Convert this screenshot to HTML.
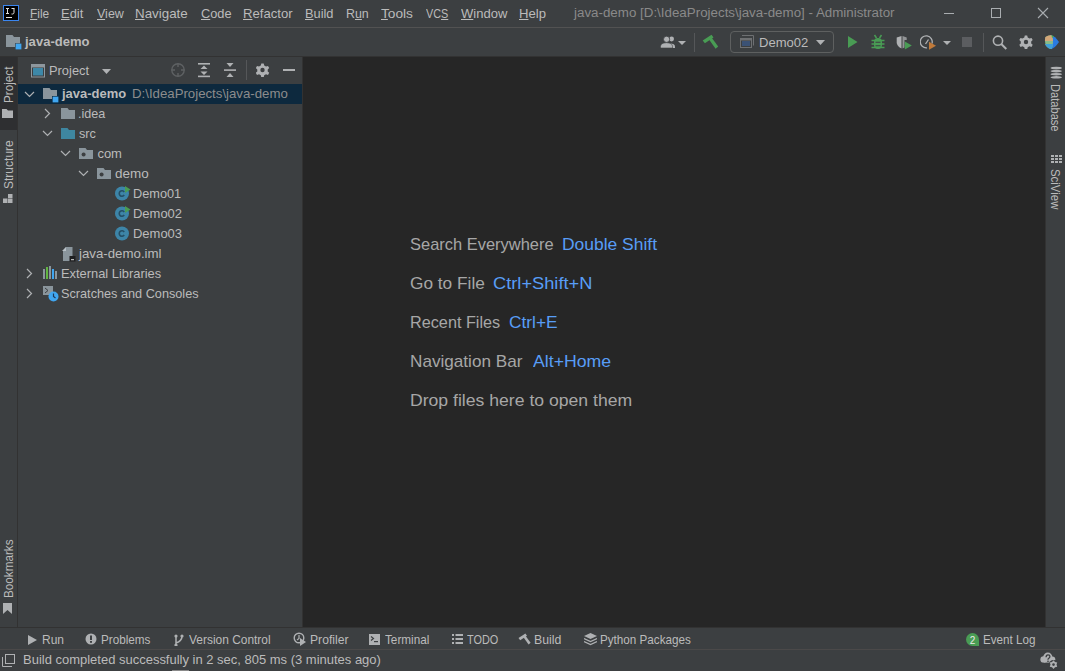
<!DOCTYPE html>
<html><head><meta charset="utf-8"><style>
html,body{margin:0;padding:0;width:1065px;height:671px;overflow:hidden;background:#3c3f41}
.r{position:absolute;display:block}
.t{position:absolute;white-space:pre;font-family:"Liberation Sans",sans-serif}
u{text-decoration:underline;text-underline-offset:1px}
</style></head><body>
<div class="r" style="left:0px;top:0px;width:1065px;height:671px;background:#3c3f41;"></div>
<div class="r" style="left:0px;top:27px;width:1065px;height:1px;background:#525252;"></div>
<div class="r" style="left:0px;top:56px;width:1065px;height:1px;background:#323232;"></div>
<div class="r" style="left:0px;top:57px;width:17px;height:570px;background:#3c3f41;"></div>
<div class="r" style="left:0px;top:57px;width:17px;height:73px;background:#2e2f31;"></div>
<div class="r" style="left:17px;top:57px;width:1px;height:570px;background:#323232;"></div>
<div class="r" style="left:302px;top:57px;width:1px;height:570px;background:#323232;"></div>
<div class="r" style="left:303px;top:57px;width:742px;height:570px;background:#262626;"></div>
<div class="r" style="left:1045px;top:57px;width:1px;height:570px;background:#323232;"></div>
<div class="r" style="left:0px;top:627px;width:1065px;height:1px;background:#323232;"></div>
<div class="r" style="left:0px;top:649px;width:1065px;height:1px;background:#4b4949;"></div>
<div class="r" style="left:18px;top:84px;width:284px;height:20px;background:#0d293e;"></div>
<svg class="r" style="left:3px;top:5px" width="17" height="17" viewBox="0 0 17 17"><rect x="0.5" y="0.5" width="15" height="15" fill="#000" stroke="#3b86f0" stroke-width="1"/><path d="M3 3.5h3M4.5 3.5v5M3 8.5h3M8.5 3.5h3M11 3.5v4q0 1.5-1.5 1.5h-1" stroke="#e0e0e0" stroke-width="1" fill="none"/><rect x="3" y="12" width="6" height="1" fill="#e0e0e0"/></svg>
<div class="t" style="left:30.19px;top:7.00px;font-size:13px;line-height:13px;color:#bbbbbb;font-weight:normal;transform-origin:0 0;transform:scaleX(0.9150);"><u>F</u>ile</div>
<div class="t" style="left:61.10px;top:7.00px;font-size:13px;line-height:13px;color:#bbbbbb;font-weight:normal;transform-origin:0 0;transform:scaleX(0.9955);"><u>E</u>dit</div>
<div class="t" style="left:97.00px;top:7.00px;font-size:13px;line-height:13px;color:#bbbbbb;font-weight:normal;transform-origin:0 0;transform:scaleX(0.9607);"><u>V</u>iew</div>
<div class="t" style="left:134.97px;top:7.00px;font-size:13px;line-height:13px;color:#bbbbbb;font-weight:normal;transform-origin:0 0;transform:scaleX(1.0280);"><u>N</u>avigate</div>
<div class="t" style="left:200.80px;top:7.00px;font-size:13px;line-height:13px;color:#bbbbbb;font-weight:normal;transform-origin:0 0;transform:scaleX(0.9839);"><u>C</u>ode</div>
<div class="t" style="left:243.19px;top:7.00px;font-size:13px;line-height:13px;color:#bbbbbb;font-weight:normal;transform-origin:0 0;transform:scaleX(1.0083);"><u>R</u>efactor</div>
<div class="t" style="left:304.51px;top:7.00px;font-size:13px;line-height:13px;color:#bbbbbb;font-weight:normal;transform-origin:0 0;transform:scaleX(0.9857);"><u>B</u>uild</div>
<div class="t" style="left:345.75px;top:7.00px;font-size:13px;line-height:13px;color:#bbbbbb;font-weight:normal;transform-origin:0 0;transform:scaleX(0.9545);">R<u>u</u>n</div>
<div class="t" style="left:381.20px;top:7.00px;font-size:13px;line-height:13px;color:#bbbbbb;font-weight:normal;transform-origin:0 0;transform:scaleX(1.0533);"><u>T</u>ools</div>
<div class="t" style="left:426.30px;top:7.00px;font-size:13px;line-height:13px;color:#bbbbbb;font-weight:normal;transform-origin:0 0;transform:scaleX(0.8333);">VC<u>S</u></div>
<div class="t" style="left:460.90px;top:7.00px;font-size:13px;line-height:13px;color:#bbbbbb;font-weight:normal;transform-origin:0 0;transform:scaleX(1.0021);"><u>W</u>indow</div>
<div class="t" style="left:519.29px;top:7.00px;font-size:13px;line-height:13px;color:#bbbbbb;font-weight:normal;transform-origin:0 0;transform:scaleX(1.0077);"><u>H</u>elp</div>
<div class="t" style="left:573.91px;top:6.84px;font-size:12px;line-height:12px;color:#8a8a8a;font-weight:normal;transform-origin:0 0;transform:scaleX(1.1125);">java-demo [D:\IdeaProjects\java-demo] - Administrator</div>
<div class="r" style="left:944px;top:13px;width:10px;height:1px;background:#a9adb0;"></div>
<div class="r" style="left:991px;top:8px;width:10px;height:10px;background:none;border:1px solid #a9adb0;box-sizing:border-box"></div>
<svg class="r" style="left:1037px;top:7px" width="12" height="12" viewBox="0 0 12 12"><path d="M1 1L11 11M11 1L1 11" stroke="#a9adb0" stroke-width="1.1"/></svg>
<svg class="r" style="left:6px;top:35px" width="17" height="15" viewBox="0 0 17 15"><path d="M0 0h6.5l1.5 2h6v7h-5v3h-9z" fill="#8a959c"/><rect x="9.25" y="8.25" width="6.5" height="6.5" fill="#40a6f0" stroke="#3c3f41" stroke-width="0.5"/></svg>
<div class="t" style="left:24.50px;top:35.00px;font-size:13px;line-height:13px;color:#bbbbbb;font-weight:bold;transform-origin:0 0;transform:scaleX(1.0031);">java-demo</div>
<svg class="r" style="left:660px;top:35px" width="16" height="14" viewBox="0 0 16 14"><circle cx="11.6" cy="4" r="2.4" fill="#afb1b3"/><path d="M10 8.5q5 0 5 3v1.5h-4z" fill="#afb1b3"/><circle cx="6.6" cy="4.3" r="3.1" fill="#afb1b3" stroke="#3c3f41" stroke-width="0.8"/><path d="M0.5 13v-1.5q0-3.5 6-3.8 6 .3 6 3.8v1.5z" fill="#afb1b3" stroke="#3c3f41" stroke-width="0.6"/></svg>
<svg class="r" style="left:678px;top:41px" width="8" height="5" viewBox="0 0 8 5"><path d="M0 0h8l-4 4z" fill="#afb1b3"/></svg>
<div class="r" style="left:694px;top:33px;width:1px;height:19px;background:#555759;"></div>
<svg class="r" style="left:702px;top:34px" width="17" height="15" viewBox="0 0 17 15"><path d="M0.7 6.5L9.5 0.8L11.5 3.6L2.9 9.2Z" fill="#499c54"/><path d="M6.3 4.5L8.8 2.5L16.2 12.6L13.6 14.8Z" fill="#499c54"/></svg>
<div class="r" style="left:730px;top:31px;width:104px;height:22px;background:none;border:1px solid #5e6060;border-radius:4px;box-sizing:border-box"></div>
<svg class="r" style="left:740px;top:35px" width="15" height="14" viewBox="0 0 15 14"><path d="M2 0.5H13.5V10.5" stroke="#6e7072" fill="none"/><rect x="0.5" y="3.5" width="11" height="9" fill="none" stroke="#6e7072"/><rect x="0" y="3" width="12" height="2.5" fill="#6e7072"/><rect x="2" y="6" width="8" height="5" fill="#3b5275"/></svg>
<div class="t" style="left:758.60px;top:36.00px;font-size:13px;line-height:13px;color:#bbbbbb;font-weight:normal;transform-origin:0 0;transform:scaleX(1.0042);">Demo02</div>
<svg class="r" style="left:816px;top:40px" width="9" height="5" viewBox="0 0 9 5"><path d="M0 0h9l-4.5 5z" fill="#afb1b3"/></svg>
<svg class="r" style="left:847px;top:36px" width="11" height="13" viewBox="0 0 11 13"><path d="M1 0L10.5 6L1 12Z" fill="#499c54"/></svg>
<svg class="r" style="left:871px;top:34px" width="15" height="16" viewBox="0 0 15 16"><path d="M3.5 1l2 3M10.5 1l-2 3" stroke="#499c54" stroke-width="1.5"/><rect x="3" y="4" width="8" height="11" rx="4" fill="#499c54"/><path d="M0.5 6.5h13M0.5 10h13M0.5 13.5h13" stroke="#499c54" stroke-width="1.6"/><path d="M4.5 8.3h5M4.5 11.8h5" stroke="#3c3f41" stroke-width="1.1"/></svg>
<svg class="r" style="left:896px;top:36px" width="17" height="14" viewBox="0 0 17 14"><path d="M0.7 1.5L5.5 0V12.5Q1.5 10.5 0.7 7Z" fill="#afb1b3"/><path d="M6.5 0L10.7 1.5V4H8.5V11.5L6.5 12.5Z" fill="#afb1b3" opacity="0.75"/><path d="M8.8 5.4L15.8 9.4L8.8 13.4Z" fill="#499c54"/></svg>
<svg class="r" style="left:920px;top:35px" width="17" height="16" viewBox="0 0 17 16"><path d="M12 8.5A6 6 0 1 0 7 12.8" stroke="#afb1b3" stroke-width="1.3" fill="none"/><path d="M8.5 4.5L5.5 9" stroke="#afb1b3" stroke-width="1.3"/><path d="M9 6.8L16 10.8L9 14.8Z" fill="#c07a3a"/></svg>
<svg class="r" style="left:943px;top:41px" width="8" height="5" viewBox="0 0 8 5"><path d="M0 0h8l-4 4z" fill="#afb1b3"/></svg>
<div class="r" style="left:962px;top:37px;width:10px;height:10px;background:#5b5d60;"></div>
<div class="r" style="left:983px;top:33px;width:1px;height:19px;background:#555759;"></div>
<svg class="r" style="left:992px;top:35px" width="16" height="15" viewBox="0 0 16 15"><circle cx="6" cy="5.7" r="4.6" stroke="#afb1b3" stroke-width="1.6" fill="none"/><path d="M9.3 9L14.3 14" stroke="#afb1b3" stroke-width="2"/></svg>
<svg class="r" style="left:1019px;top:35px" width="14" height="14" viewBox="0 0 14 14"><path d="M7 7m-1.2-6.5h2.4l.5 2 1.8 1 2-.6 1.2 2.1-1.5 1.4v2l1.5 1.4-1.2 2.1-2-.6-1.8 1-.5 2h-2.4l-.5-2-1.8-1-2 .6-1.2-2.1 1.5-1.4v-2l-1.5-1.4 1.2-2.1 2 .6 1.8-1z" fill="#afb1b3"/><circle cx="7" cy="7" r="2.2" fill="#3c3f41"/></svg>
<svg class="r" style="left:1044px;top:34px" width="16" height="16" viewBox="0 0 16 16"><path d="M7 1.2Q11 2 15 8Q11 14 7 15.2Z" fill="#2a7be0"/><path d="M1.5 3Q4 1 7.5 1.2Q10.5 8 7.5 15Q4 15 1.5 11Q0.5 7 1.5 3Z" fill="#88bb88"/><path d="M1.5 3Q4 1 7.5 1.2Q9 4 9 7H0.9Q0.9 5 1.5 3Z" fill="#d2a678"/><path d="M1 10H9Q8.8 12.5 7.5 15Q4 15 1.5 11Z" fill="#3fa0d8"/><path d="M7.5 1.2Q9 1.5 10 2.2L8 4Z" fill="#4cae4f"/></svg>
<div class="t" style="left:1.6px;top:102.90px;font-size:13px;line-height:13px;color:#bbbbbb;transform-origin:0 0;transform:rotate(-90deg) scaleX(0.9000)">Project</div>
<svg class="r" style="left:2px;top:109px" width="11" height="9" viewBox="0 0 11 9"><path d="M0 0h4.5l1.5 1.5h5v7.5h-11z" fill="#afb1b3"/></svg>
<div class="t" style="left:1.6px;top:188.62px;font-size:13px;line-height:13px;color:#bbbbbb;transform-origin:0 0;transform:rotate(-90deg) scaleX(0.9250)">Structure</div>
<svg class="r" style="left:3px;top:194px" width="10" height="10" viewBox="0 0 10 10"><rect x="5" y="0" width="4.5" height="4" fill="#afb1b3"/><rect x="0" y="4.5" width="4.5" height="4.5" fill="#afb1b3"/><rect x="5" y="4.5" width="4.5" height="4.5" fill="#afb1b3"/></svg>
<div class="t" style="left:1.6px;top:597.90px;font-size:13px;line-height:13px;color:#bbbbbb;transform-origin:0 0;transform:rotate(-90deg) scaleX(0.9000)">Bookmarks</div>
<svg class="r" style="left:3px;top:603px" width="10" height="12" viewBox="0 0 10 12"><path d="M0 0h9v11l-4.5-4-4.5 4z" fill="#afb1b3"/></svg>
<svg class="r" style="left:1050px;top:66px" width="13" height="14" viewBox="0 0 13 14"><rect x="0.5" y="0.7" width="11.5" height="2.6" rx="5.75" ry="1.3" fill="#afb1b3"/><rect x="0.5" y="3.8" width="11.5" height="2.6" rx="5.75" ry="1.3" fill="#afb1b3"/><rect x="0.5" y="6.9" width="11.5" height="2.6" rx="5.75" ry="1.3" fill="#afb1b3"/><rect x="0.5" y="10.0" width="11.5" height="2.6" rx="5.75" ry="1.3" fill="#afb1b3"/></svg>
<div class="t" style="left:1061.5px;top:84.15px;font-size:13px;line-height:13px;color:#bbbbbb;transform-origin:0 0;transform:rotate(90deg) scaleX(0.8545)">Database</div>
<svg class="r" style="left:1051px;top:155px" width="12" height="11" viewBox="0 0 12 11"><path d="M0 0h3v2h-3zM4 0h3v2h-3zM8 0h3v2h-3zM0 3h3v2h-3zM4 3h3v2h-3zM8 3h3v2h-3zM0 6h3v2h-3zM4 6h3v2h-3zM8 6h3v2h-3z" fill="#afb1b3"/></svg>
<div class="t" style="left:1061.5px;top:169.12px;font-size:13px;line-height:13px;color:#bbbbbb;transform-origin:0 0;transform:rotate(90deg) scaleX(0.8778)">SciView</div>
<svg class="r" style="left:31px;top:64px" width="15" height="14" viewBox="0 0 15 14"><rect x="0.5" y="0.5" width="13" height="12.5" fill="none" stroke="#8e979d"/><rect x="0" y="0" width="14" height="3.5" fill="#8e979d"/><rect x="2" y="4" width="10" height="7.5" fill="#3d88a8"/></svg>
<div class="t" style="left:49.41px;top:64.00px;font-size:13px;line-height:13px;color:#bbbbbb;font-weight:normal;transform-origin:0 0;transform:scaleX(0.9900);">Project</div>
<svg class="r" style="left:102px;top:69px" width="10" height="5" viewBox="0 0 10 5"><path d="M0 0h9l-4.5 5z" fill="#afb1b3"/></svg>
<svg class="r" style="left:170px;top:62px" width="16" height="16" viewBox="0 0 16 16"><circle cx="8" cy="8" r="6.2" stroke="#5e6163" stroke-width="1.4" fill="none"/><path d="M8 1.5v3.5M8 11v3.5M1.5 8h3.5M11 8h3.5" stroke="#5e6163" stroke-width="1.4"/></svg>
<svg class="r" style="left:198px;top:63px" width="12" height="15" viewBox="0 0 12 15"><rect x="0" y="0" width="12" height="1.6" fill="#afb1b3"/><rect x="0" y="12.6" width="12" height="1.6" fill="#afb1b3"/><path d="M2.5 6h7l-3.5-3.5z M2.5 8.5h7l-3.5 3.5z" fill="#afb1b3"/></svg>
<svg class="r" style="left:224px;top:63px" width="13" height="15" viewBox="0 0 13 15"><rect x="0" y="6.3" width="12" height="1.6" fill="#afb1b3"/><path d="M2.5 0h7l-3.5 4z M2.5 14h7l-3.5-4z" fill="#afb1b3"/></svg>
<div class="r" style="left:246px;top:60px;width:1px;height:20px;background:#555759;"></div>
<svg class="r" style="left:256px;top:63px" width="14" height="14" viewBox="0 0 14 14"><path d="M6.5 7m-1.2-6.5h2.4l.5 2 1.8 1 2-.6 1.2 2.1-1.5 1.4v2l1.5 1.4-1.2 2.1-2-.6-1.8 1-.5 2h-2.4l-.5-2-1.8-1-2 .6-1.2-2.1 1.5-1.4v-2l-1.5-1.4 1.2-2.1 2 .6 1.8-1z" fill="#afb1b3"/><circle cx="6.5" cy="7" r="2.2" fill="#3c3f41"/></svg>
<div class="r" style="left:283px;top:69px;width:12px;height:2px;background:#afb1b3;"></div>
<svg class="r" style="left:24px;top:91px" width="11" height="7" viewBox="0 0 11 7"><path d="M1 1l4.5 4.5 4.5-4.5" stroke="#afb1b3" stroke-width="1.2" fill="none"/></svg>
<svg class="r" style="left:43px;top:88px" width="16" height="15" viewBox="0 0 16 15"><path d="M0 0h6.5l1.5 2h6v6h-5v3h-9z" fill="#8a959c"/><rect x="9.25" y="8.25" width="6.5" height="6.5" fill="#40a6f0" stroke="#0d293e" stroke-width="0.5"/></svg>
<div class="t" style="left:62.10px;top:87.00px;font-size:13px;line-height:13px;color:#bbbbbb;font-weight:bold;transform-origin:0 0;transform:scaleX(0.9985);">java-demo</div>
<div class="t" style="left:131.68px;top:87.00px;font-size:13px;line-height:13px;color:#8c8c8c;font-weight:normal;transform-origin:0 0;transform:scaleX(1.0171);">D:\IdeaProjects\java-demo</div>
<svg class="r" style="left:44px;top:108px" width="7" height="11" viewBox="0 0 7 11"><path d="M1 1l4.5 4.5-4.5 4.5" stroke="#afb1b3" stroke-width="1.2" fill="none"/></svg>
<svg class="r" style="left:61px;top:108px" width="15" height="11" viewBox="0 0 15 11"><path d="M0 0h6.5l1.5 2h6v9h-14z" fill="#8a959c"/></svg>
<div class="t" style="left:78.33px;top:107.00px;font-size:13px;line-height:13px;color:#bbbbbb;font-weight:normal;transform-origin:0 0;transform:scaleX(0.9679);">.idea</div>
<svg class="r" style="left:42px;top:130px" width="11" height="7" viewBox="0 0 11 7"><path d="M1 1l4.5 4.5 4.5-4.5" stroke="#afb1b3" stroke-width="1.2" fill="none"/></svg>
<svg class="r" style="left:61px;top:128px" width="15" height="11" viewBox="0 0 15 11"><path d="M0 0h6.5l1.5 2h6v9h-14z" fill="#3e86a0"/></svg>
<div class="t" style="left:79.30px;top:127.00px;font-size:13px;line-height:13px;color:#bbbbbb;font-weight:normal;transform-origin:0 0;transform:scaleX(0.9765);">src</div>
<svg class="r" style="left:60px;top:150px" width="11" height="7" viewBox="0 0 11 7"><path d="M1 1l4.5 4.5 4.5-4.5" stroke="#afb1b3" stroke-width="1.2" fill="none"/></svg>
<svg class="r" style="left:79px;top:148px" width="15" height="11" viewBox="0 0 15 11"><path d="M0 0h6.5l1.5 2h6v9h-14z" fill="#8a959c"/><circle cx="4.6" cy="6.4" r="2" fill="#3c3f41"/></svg>
<div class="t" style="left:97.40px;top:147.00px;font-size:13px;line-height:13px;color:#bbbbbb;font-weight:normal;transform-origin:0 0;transform:scaleX(1.0000);">com</div>
<svg class="r" style="left:78px;top:170px" width="11" height="7" viewBox="0 0 11 7"><path d="M1 1l4.5 4.5 4.5-4.5" stroke="#afb1b3" stroke-width="1.2" fill="none"/></svg>
<svg class="r" style="left:97px;top:168px" width="15" height="11" viewBox="0 0 15 11"><path d="M0 0h6.5l1.5 2h6v9h-14z" fill="#8a959c"/><circle cx="4.6" cy="6.4" r="2" fill="#3c3f41"/></svg>
<div class="t" style="left:115.40px;top:167.00px;font-size:13px;line-height:13px;color:#bbbbbb;font-weight:normal;transform-origin:0 0;transform:scaleX(1.0344);">demo</div>
<svg class="r" style="left:115px;top:186px" width="16" height="16" viewBox="0 0 16 16"><circle cx="7" cy="7.5" r="7" fill="#3d85a8"/><path d="M9.2 6a2.7 2.7 0 1 0 0 3" stroke="#254f66" stroke-width="1.6" fill="none"/><path d="M10 0l5.5 3.5-5.5 3.5z" fill="#499c54"/></svg>
<div class="t" style="left:132.72px;top:187.00px;font-size:13px;line-height:13px;color:#bbbbbb;font-weight:normal;transform-origin:0 0;transform:scaleX(0.9792);">Demo01</div>
<svg class="r" style="left:115px;top:206px" width="16" height="16" viewBox="0 0 16 16"><circle cx="7" cy="7.5" r="7" fill="#3d85a8"/><path d="M9.2 6a2.7 2.7 0 1 0 0 3" stroke="#254f66" stroke-width="1.6" fill="none"/><path d="M10 0l5.5 3.5-5.5 3.5z" fill="#499c54"/></svg>
<div class="t" style="left:132.70px;top:207.00px;font-size:13px;line-height:13px;color:#bbbbbb;font-weight:normal;transform-origin:0 0;transform:scaleX(0.9979);">Demo02</div>
<svg class="r" style="left:115px;top:226px" width="16" height="16" viewBox="0 0 16 16"><circle cx="7" cy="7.5" r="7" fill="#3d85a8"/><path d="M9.2 6a2.7 2.7 0 1 0 0 3" stroke="#254f66" stroke-width="1.6" fill="none"/></svg>
<div class="t" style="left:132.70px;top:227.00px;font-size:13px;line-height:13px;color:#bbbbbb;font-weight:normal;transform-origin:0 0;transform:scaleX(0.9979);">Demo03</div>
<svg class="r" style="left:62px;top:247px" width="15" height="15" viewBox="0 0 15 15"><path d="M4 0h6.5v14h-9.5v-10z" fill="#8a959c"/><path d="M4 0v4h-4z" fill="#b8c0c6"/><rect x="7.5" y="9" width="6" height="5.5" fill="#1e1f20"/><rect x="9" y="12.2" width="3" height="1" fill="#ddd"/></svg>
<div class="t" style="left:79.22px;top:247.00px;font-size:13px;line-height:13px;color:#bbbbbb;font-weight:normal;transform-origin:0 0;transform:scaleX(1.0198);">java-demo.iml</div>
<svg class="r" style="left:26px;top:268px" width="7" height="11" viewBox="0 0 7 11"><path d="M1 1l4.5 4.5-4.5 4.5" stroke="#afb1b3" stroke-width="1.2" fill="none"/></svg>
<svg class="r" style="left:43px;top:266px" width="15" height="13" viewBox="0 0 15 13"><rect x="0" y="3" width="2" height="10" fill="#8a959c"/><rect x="3" y="1" width="2" height="12" fill="#62b543"/><rect x="6" y="0" width="2" height="13" fill="#8a959c"/><rect x="9" y="3" width="2" height="10" fill="#40a6f0"/><rect x="12" y="5" width="2" height="8" fill="#8a959c"/></svg>
<div class="t" style="left:60.81px;top:267.00px;font-size:13px;line-height:13px;color:#bbbbbb;font-weight:normal;transform-origin:0 0;transform:scaleX(0.9900);">External Libraries</div>
<svg class="r" style="left:26px;top:288px" width="7" height="11" viewBox="0 0 7 11"><path d="M1 1l4.5 4.5-4.5 4.5" stroke="#afb1b3" stroke-width="1.2" fill="none"/></svg>
<svg class="r" style="left:43px;top:286px" width="16" height="16" viewBox="0 0 16 16"><rect x="0" y="0" width="10" height="9" fill="#8a959c"/><path d="M2 2l3 2.5-3 2.5" stroke="#3c3f41" fill="none"/><circle cx="10.5" cy="10.5" r="5" fill="#40a6f0"/><path d="M10.5 7.5v3l2 1.5" stroke="#1e3a5a" stroke-width="1.2" fill="none"/></svg>
<div class="t" style="left:60.82px;top:287.00px;font-size:13px;line-height:13px;color:#bbbbbb;font-weight:normal;transform-origin:0 0;transform:scaleX(0.9764);">Scratches and Consoles</div>
<div class="t" style="left:409.63px;top:235.61px;font-size:17px;line-height:17px;color:#a7a7a7;font-weight:normal;transform-origin:0 0;transform:scaleX(0.9680);">Search Everywhere</div>
<div class="t" style="left:562.47px;top:235.61px;font-size:17px;line-height:17px;color:#589df6;font-weight:normal;transform-origin:0 0;transform:scaleX(1.0261);">Double Shift</div>
<div class="t" style="left:409.58px;top:274.61px;font-size:17px;line-height:17px;color:#a7a7a7;font-weight:normal;transform-origin:0 0;transform:scaleX(1.0153);">Go to File</div>
<div class="t" style="left:493.23px;top:274.61px;font-size:17px;line-height:17px;color:#589df6;font-weight:normal;transform-origin:0 0;transform:scaleX(1.0736);">Ctrl+Shift+N</div>
<div class="t" style="left:409.65px;top:313.61px;font-size:17px;line-height:17px;color:#a7a7a7;font-weight:normal;transform-origin:0 0;transform:scaleX(0.9548);">Recent Files</div>
<div class="t" style="left:509.28px;top:313.61px;font-size:17px;line-height:17px;color:#589df6;font-weight:normal;transform-origin:0 0;transform:scaleX(1.0196);">Ctrl+E</div>
<div class="t" style="left:409.59px;top:352.61px;font-size:17px;line-height:17px;color:#a7a7a7;font-weight:normal;transform-origin:0 0;transform:scaleX(1.0081);">Navigation Bar</div>
<div class="t" style="left:533.10px;top:352.61px;font-size:17px;line-height:17px;color:#589df6;font-weight:normal;transform-origin:0 0;transform:scaleX(1.0413);">Alt+Home</div>
<div class="t" style="left:409.56px;top:391.61px;font-size:17px;line-height:17px;color:#a7a7a7;font-weight:normal;transform-origin:0 0;transform:scaleX(1.0357);">Drop files here to open them</div>
<svg class="r" style="left:28px;top:635px" width="9" height="10" viewBox="0 0 9 10"><path d="M0 0l9 5-9 5z" fill="#afb1b3"/></svg>
<div class="t" style="left:42.38px;top:633.00px;font-size:13px;line-height:13px;color:#bbbbbb;font-weight:normal;transform-origin:0 0;transform:scaleX(0.9227);">Run</div>
<svg class="r" style="left:85px;top:633px" width="12" height="12" viewBox="0 0 12 12"><circle cx="6" cy="6" r="5.5" fill="#afb1b3"/><rect x="5" y="2.5" width="2" height="4.5" fill="#3c3f41"/><rect x="5" y="8" width="2" height="1.8" fill="#3c3f41"/></svg>
<div class="t" style="left:100.50px;top:633.00px;font-size:13px;line-height:13px;color:#bbbbbb;font-weight:normal;transform-origin:0 0;transform:scaleX(0.9000);">Problems</div>
<svg class="r" style="left:174px;top:634px" width="10" height="12" viewBox="0 0 10 12"><circle cx="2" cy="2" r="1.6" fill="#afb1b3"/><circle cx="8" cy="2" r="1.6" fill="#afb1b3"/><circle cx="2" cy="11" r="1.6" fill="#afb1b3"/><path d="M2 2v9M8 2q0 5-6 7" stroke="#afb1b3" stroke-width="1.5" fill="none"/></svg>
<div class="t" style="left:188.90px;top:633.00px;font-size:13px;line-height:13px;color:#bbbbbb;font-weight:normal;transform-origin:0 0;transform:scaleX(0.9182);">Version Control</div>
<svg class="r" style="left:293px;top:632px" width="13" height="14" viewBox="0 0 13 14"><circle cx="6" cy="6" r="4.8" stroke="#afb1b3" stroke-width="1.4" fill="none"/><path d="M6 3v3.5l-2 1.5" stroke="#afb1b3" stroke-width="1.2" fill="none"/><path d="M7 6l6 4-6 4z" fill="#afb1b3"/></svg>
<div class="t" style="left:309.67px;top:633.00px;font-size:13px;line-height:13px;color:#bbbbbb;font-weight:normal;transform-origin:0 0;transform:scaleX(0.9350);">Profiler</div>
<svg class="r" style="left:369px;top:634px" width="11" height="11" viewBox="0 0 11 11"><rect x="0" y="0" width="11" height="11" fill="#afb1b3"/><path d="M2 2.5l2.5 2-2.5 2" stroke="#3c3f41" stroke-width="1.2" fill="none"/><rect x="5" y="7" width="4" height="1.2" fill="#3c3f41"/></svg>
<div class="t" style="left:385.20px;top:633.00px;font-size:13px;line-height:13px;color:#bbbbbb;font-weight:normal;transform-origin:0 0;transform:scaleX(0.9020);">Terminal</div>
<svg class="r" style="left:452px;top:634px" width="11" height="10" viewBox="0 0 11 10"><path d="M0 0h2v2h-2zM0 4h2v2h-2zM0 8h2v2h-2z M3.5 0h7.5v2h-7.5zM3.5 4h7.5v2h-7.5zM3.5 8h7.5v2h-7.5z" fill="#afb1b3"/></svg>
<div class="t" style="left:467.30px;top:633.00px;font-size:13px;line-height:13px;color:#bbbbbb;font-weight:normal;transform-origin:0 0;transform:scaleX(0.8378);">TODO</div>
<svg class="r" style="left:518px;top:633px" width="14" height="13" viewBox="0 0 14 13"><path d="M0.5 5L7.4 0.6L9 2.8L2.2 7.2Z" fill="#afb1b3"/><path d="M4.9 3.5L6.9 2L12.6 9.8L10.6 11.5Z" fill="#afb1b3"/></svg>
<div class="t" style="left:534.25px;top:633.00px;font-size:13px;line-height:13px;color:#bbbbbb;font-weight:normal;transform-origin:0 0;transform:scaleX(0.9464);">Build</div>
<svg class="r" style="left:584px;top:633px" width="13" height="13" viewBox="0 0 13 13"><path d="M6.5 0l6.5 3-6.5 3-6.5-3z" fill="#afb1b3"/><path d="M0 5.5l6.5 3 6.5-3M0 8.5l6.5 3 6.5-3" stroke="#afb1b3" stroke-width="1.3" fill="none"/></svg>
<div class="t" style="left:600.10px;top:633.00px;font-size:13px;line-height:13px;color:#bbbbbb;font-weight:normal;transform-origin:0 0;transform:scaleX(0.8970);">Python Packages</div>
<svg class="r" style="left:966px;top:633px" width="14" height="13" viewBox="0 0 14 13"><path d="M6.5 0a6.5 6.5 0 1 0 0 13h6.5v-6.5a6.5 6.5 0 0 0 -6.5 -6.5z" fill="#499c54"/><text x="6.5" y="10.5" font-family="Liberation Sans" font-size="10" fill="#e8e8e8" text-anchor="middle">2</text></svg>
<div class="t" style="left:982.80px;top:633.00px;font-size:13px;line-height:13px;color:#bbbbbb;font-weight:normal;transform-origin:0 0;transform:scaleX(0.8965);">Event Log</div>
<div class="r" style="left:172px;top:670px;width:17px;height:1px;background:#8a8a8a;"></div>
<svg class="r" style="left:2px;top:654px" width="13" height="13" viewBox="0 0 13 13"><rect x="3.5" y="0.5" width="9" height="9" fill="none" stroke="#afb1b3"/><path d="M0.5 3v9.5h9.5" stroke="#afb1b3" fill="none"/></svg>
<div class="t" style="left:22.80px;top:653.00px;font-size:13px;line-height:13px;color:#bbbbbb;font-weight:normal;transform-origin:0 0;transform:scaleX(0.9986);">Build completed successfully in 2 sec, 805 ms (3 minutes ago)</div>
<svg class="r" style="left:1040px;top:652px" width="19" height="18" viewBox="0 0 19 18"><circle cx="3.6" cy="7.4" r="3.2" fill="#afb1b3"/><circle cx="7.8" cy="5.2" r="4.6" fill="#afb1b3"/><circle cx="12.3" cy="7.6" r="3" fill="#afb1b3"/><rect x="3.6" y="6" width="8.7" height="4.6" fill="#afb1b3"/><path d="M6.1 5.2Q6.1 2.8 8 2.8Q9.9 2.8 9.9 4.6Q9.9 5.8 8.5 6.5Q8 6.8 8 7.8" stroke="#3c3f41" stroke-width="1.3" fill="none"/><rect x="7.3" y="8.6" width="1.4" height="1.4" fill="#3c3f41"/><circle cx="13.5" cy="12.6" r="4.6" fill="#3c3f41"/><path d="M13.50 8.30 L15.00 10.00 L17.22 10.45 L16.50 12.60 L17.22 14.75 L15.00 15.20 L13.50 16.90 L12.00 15.20 L9.78 14.75 L10.50 12.60 L9.78 10.45 L12.00 10.00Z" fill="#afb1b3"/><circle cx="13.5" cy="12.6" r="1.3" fill="#3c3f41"/></svg>

</body></html>
